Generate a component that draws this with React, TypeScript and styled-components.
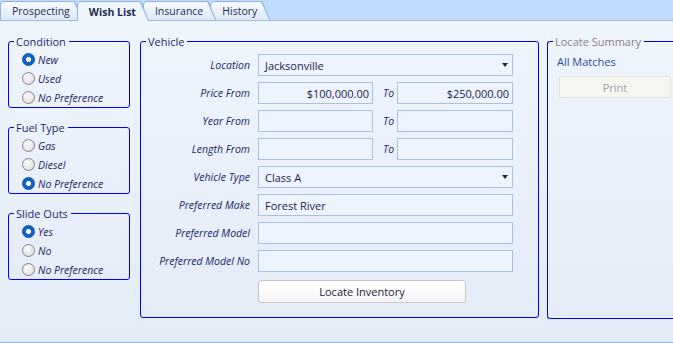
import React from "react"
import styled, { createGlobalStyle, css } from "styled-components"

const GlobalStyle = createGlobalStyle`
body {
  margin: 0;
  background: #e3ebf7;
}
* { box-sizing: border-box; }
`

const uiFont = `"Open Sans", "Noto Sans", sans-serif`

const Page = styled.div`
width: 673px;
height: 343px;
overflow: hidden;
font-family: ${uiFont};
font-size: 10.5px;
color: #1c2460;`

const TabStrip = styled.div`
height: 21px;
background: #bfdbff;
border-bottom: 1px solid #99bbe8;
display: flex;
align-items: flex-end;`

const Tab = styled.div<{ $active?: boolean; $layer: number }>`
position: relative;
z-index: ${(p) => (p.$active ? 10 : p.$layer)};
height: ${(p) => (p.$active ? 20 : 19)}px;
margin-right: -6px;
margin-bottom: ${(p) => (p.$active ? -1 : 0)}px;
padding: 1px 1px 0 1px;
background: #8db2e3;
clip-path: polygon(0 100%, 0 3px, 3px 0, calc(100% - 8px) 0, 100% 100%);`

const TabFace = styled.div<{ $active?: boolean }>`
height: 100%;
display: flex;
align-items: center;
padding: 0 12px 0 11px;
clip-path: polygon(0 100%, 0 2px, 2px 0, calc(100% - 8px) 0, 100% 100%);
background: ${(p) => (p.$active ? "#eff5fd" : "linear-gradient(#f8fbff, #dce8f8)")};
font-weight: ${(p) => (p.$active ? 700 : 400)};
font-size: 10.5px;
color: #1e2a55;
white-space: nowrap;`

const Body = styled.div`
height: 322px;
background: linear-gradient(#eff5fd, #e3ebf7);
border-bottom: 1px solid #8db2e3;
display: flex;
align-items: flex-start;
padding: 13px 0 0 8px;
gap: 8px;`

const LeftColumn = styled.div`
display: flex;
flex-direction: column;
gap: 12px;
flex: none;
margin-right: 2px;`

// the summary box runs past the window's right edge
const SummaryColumn = styled.div`
flex: 1;
min-width: 0;`

const Group = styled.fieldset<{ $width?: number; $height?: number; $open?: boolean }>`
margin: 0;
padding: 0;
flex: none;
width: ${(p) => (p.$width ? `${p.$width}px` : "100%")};
${(p) => p.$height && css`height: ${p.$height}px;`}
border: 1px solid #0000ff;
border-radius: 3px;
${(p) =>
  p.$open &&
  css`
    border-right: none;
    border-radius: 3px 0 0 3px;
  `}`

const Legend = styled.legend<{ $disabled?: boolean }>`
margin-left: 5px;
padding: 0 3px 0 2px;
line-height: 15px;
font-size: 11px;
color: ${(p) => (p.$disabled ? "#8d7e8e" : "#1c2a6a")};`

const RadioList = styled.div`
display: flex;
flex-direction: column;
padding: 1px 0 0 13px;`

const RadioRow = styled.label`
height: 19px;
display: flex;
align-items: center;
gap: 3px;
font-style: italic;
color: #1f2462;`

const RadioDot = styled.span<{ $checked?: boolean }>`
width: 13px;
height: 13px;
flex: none;
border-radius: 50%;
${(p) =>
  p.$checked
    ? css`
        border: 1px solid #0a4ea6;
        background: radial-gradient(circle, #ffffff 0 2.2px, #0f62c9 2.8px 100%);
      `
    : css`
        border: 1px solid #8f7f90;
        background: radial-gradient(circle at 40% 35%, #fbfbfb, #d8d8d8);
      `}`

const VehicleGrid = styled.div`
display: grid;
grid-template-columns: 117px 115px 24px 116px;
grid-auto-rows: 22px;
row-gap: 6px;
margin-top: 5px;`

const Label = styled.div`
align-self: center;
text-align: right;
padding-right: 8px;
font-style: italic;
color: #20266a;
white-space: nowrap;`

const ToLabel = styled.div`
align-self: center;
padding-left: 10px;
font-style: italic;
color: #20266a;`

const Field = styled.div<{ $right?: boolean; $span?: number }>`
grid-column: span ${(p) => p.$span ?? 1};
display: flex;
align-items: center;
justify-content: ${(p) => (p.$right ? "flex-end" : "space-between")};
padding: ${(p) => (p.$right ? "0 3px 0 0" : "0 4px 0 6px")};
border: 1px solid #a9c0e5;
background: #eef4fd;
font-size: 11px;
color: #1b1b52;`

const DropArrow = styled.span`
width: 0;
height: 0;
border-left: 3.5px solid transparent;
border-right: 3.5px solid transparent;
border-top: 4px solid #15284f;`

const ActionButton = styled.button`
grid-column: 2 / span 3;
justify-self: start;
width: 208px;
height: 23px;
margin-top: 2px;
border: 1px solid #c6c6c6;
border-radius: 3px;
background: linear-gradient(#ffffff, #f5f5f5);
font-family: ${uiFont};
font-size: 11px;
color: #1d1d3a;
padding: 0;`

const SummaryBody = styled.div`
display: flex;
flex-direction: column;
align-items: flex-start;
padding: 5px 0 0 9px;
gap: 7px;`

const SummaryLink = styled.div`
line-height: 15px;
font-size: 11px;
color: #1f4a9e;`

const PrintButton = styled.button`
width: 112px;
height: 22px;
margin-left: 2px;
border: 1px solid #e4e3dc;
border-radius: 2px;
background: #f6f6f0;
font-family: ${uiFont};
font-size: 11px;
color: #a59da6;
padding: 0;`

const tabs = ["Prospecting", "Wish List", "Insurance", "History"]

const radioGroups = [
  { title: "Condition", options: ["New", "Used", "No Preference"], selected: 0 },
  { title: "Fuel Type", options: ["Gas", "Diesel", "No Preference"], selected: 2 },
  { title: "Slide Outs", options: ["Yes", "No", "No Preference"], selected: 0 },
]

const wideRows = [
  { label: "Preferred Make", value: "Forest River" },
  { label: "Preferred Model", value: "" },
  { label: "Preferred Model No", value: "" },
]

const App = () => {
  return (
    <Page>
      <GlobalStyle />
      <TabStrip>
        {tabs.map((t, i) => (
          <Tab key={t} $active={i === 1} $layer={tabs.length - i}>
            <TabFace $active={i === 1}>{t}</TabFace>
          </Tab>
        ))}
      </TabStrip>
      <Body>
        <LeftColumn>
          {radioGroups.map((g) => (
            <Group key={g.title} $width={122}>
              <Legend>{g.title}</Legend>
              <RadioList>
                {g.options.map((o, i) => (
                  <RadioRow key={o}>
                    <RadioDot $checked={i === g.selected} />
                    {o}
                  </RadioRow>
                ))}
              </RadioList>
            </Group>
          ))}
        </LeftColumn>

        <Group $width={399} $height={284}>
          <Legend>Vehicle</Legend>
          <VehicleGrid>
            <Label>Location</Label>
            <Field $span={3}>
              Jacksonville
              <DropArrow />
            </Field>

            <Label>Price From</Label>
            <Field $right>$100,000.00</Field>
            <ToLabel>To</ToLabel>
            <Field $right>$250,000.00</Field>

            <Label>Year From</Label>
            <Field />
            <ToLabel>To</ToLabel>
            <Field />

            <Label>Length From</Label>
            <Field />
            <ToLabel>To</ToLabel>
            <Field />

            <Label>Vehicle Type</Label>
            <Field $span={3}>
              Class A
              <DropArrow />
            </Field>

            {wideRows.map((r) => (
              <React.Fragment key={r.label}>
                <Label>{r.label}</Label>
                <Field $span={3}>{r.value}</Field>
              </React.Fragment>
            ))}

            <ActionButton>Locate Inventory</ActionButton>
          </VehicleGrid>
        </Group>

        <SummaryColumn>
          <Group $height={285} $open>
            <Legend $disabled>Locate Summary</Legend>
            <SummaryBody>
              <SummaryLink>All Matches</SummaryLink>
              <PrintButton disabled>Print</PrintButton>
            </SummaryBody>
          </Group>
        </SummaryColumn>
      </Body>
    </Page>
  )
}

export default App
